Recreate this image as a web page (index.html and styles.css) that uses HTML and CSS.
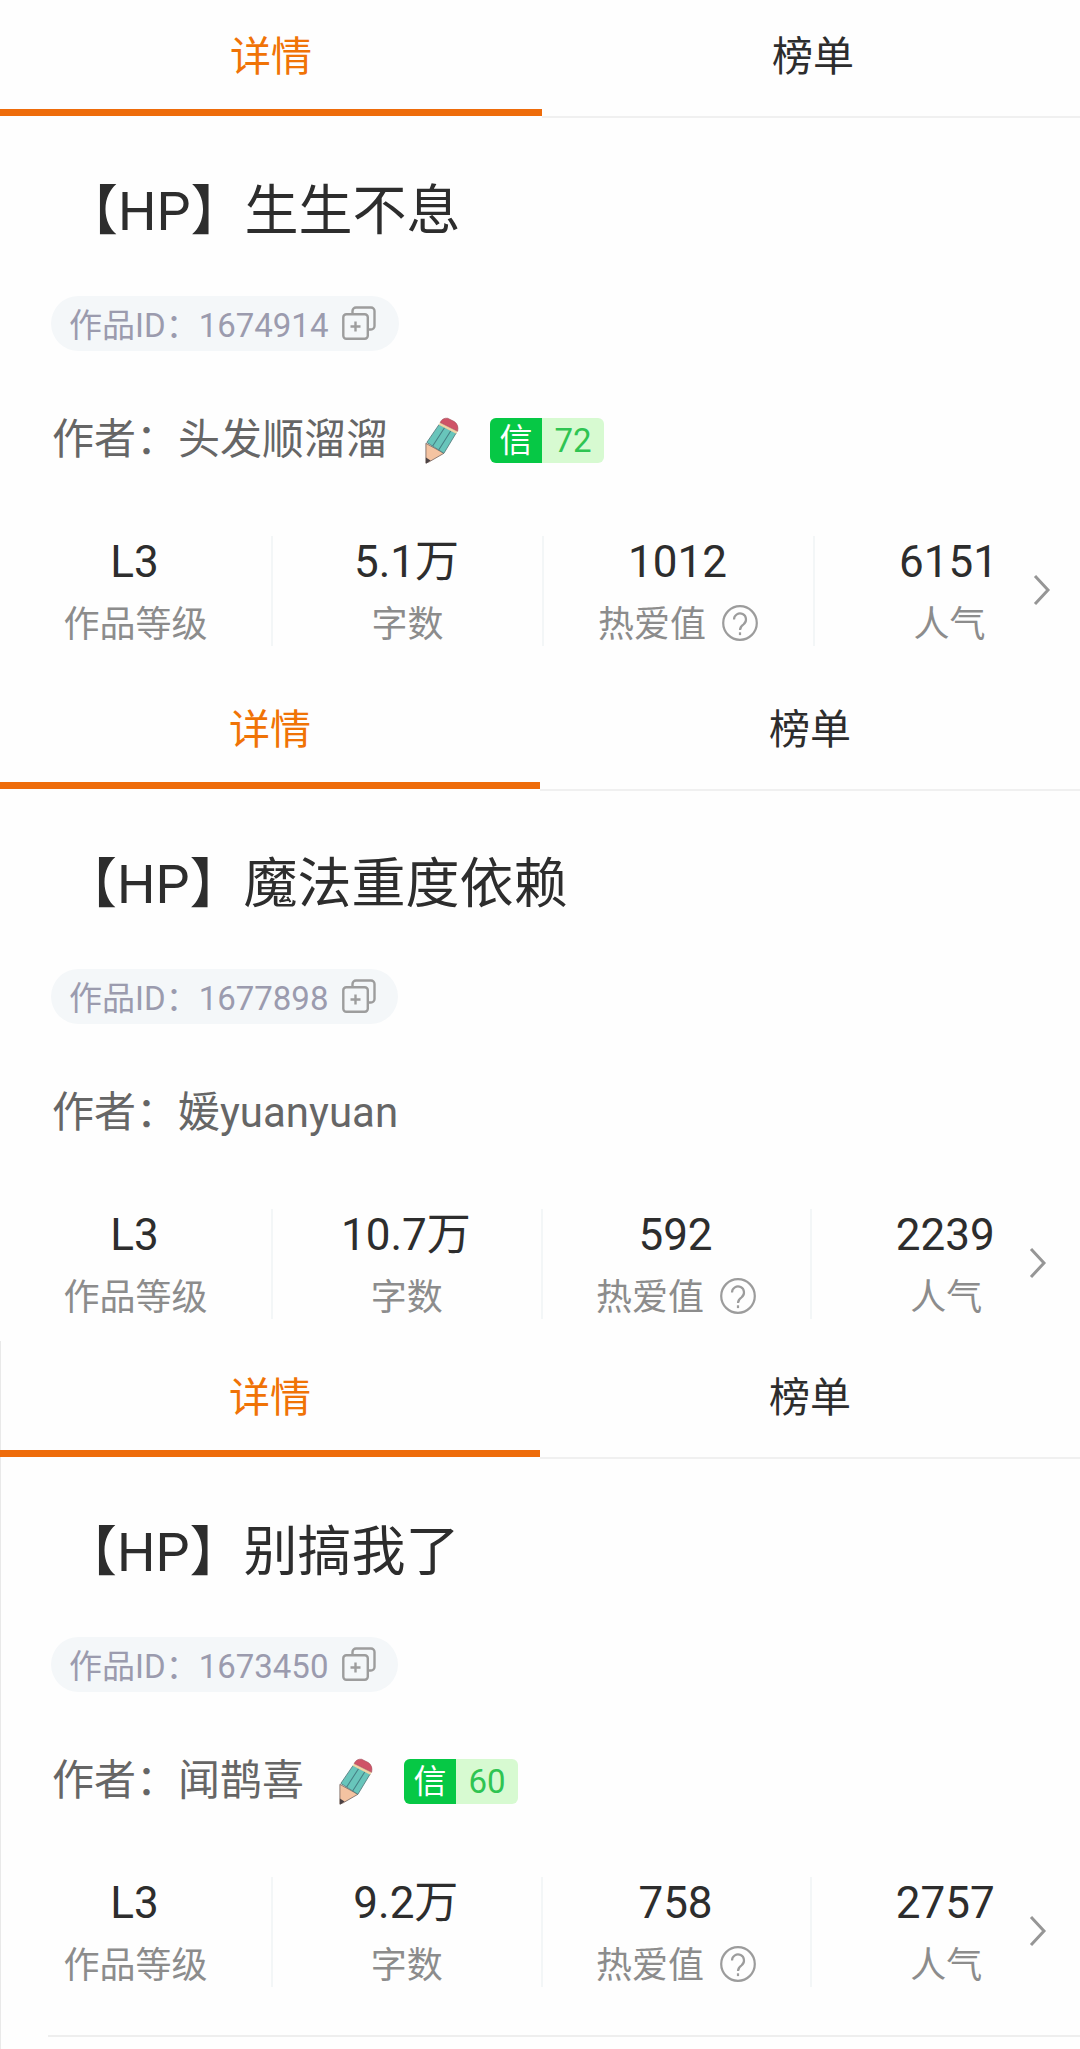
FILE: index.html
```html
<!DOCTYPE html>
<html lang="zh-CN">

<head>
  <meta charset="UTF-8">
  <meta name="viewport" content="width=device-width, initial-scale=1.0">
  <title>作品详情</title>
  <link rel="stylesheet" href="styles.css">
</head>
<body>
  <!-- shared icons -->
  <svg class="icon-defs">
    <symbol id="icon-copy" viewBox="0 0 34 34">
      <path d="M10.500 8V5a3.500 3.500 0 0 1 3.500-3.500H29a3.500 3.500 0 0 1 3.500 3.500V20a3.500 3.500 0 0 1-3.500 3.500H26" />
      <rect x="1.300" y="8.300" width="24.500" height="24.500" rx="3" />
      <path d="M13.500 15.500v10M8.500 20.500h10" />
    </symbol>
    <symbol id="icon-pencil" viewBox="0 0 38 50">
      <path d="M2 28 21 38.500 5.500 47.500 2 48.800z" fill="#f4c3a1" stroke="#6d5a55" stroke-width="0.800" />
      <path d="M2 43 7 46 2 49.500z" fill="#4b4244" />
      <path d="M16 8 34 17 21 38.500 3 27z" fill="#68c5bb" stroke="#557a7c" stroke-width="0.900" />
      <path d="M22 11 9 31M28.500 14.500 15.500 35" fill="none" stroke="#467f84" stroke-width="1.100" />
      <path d="M15.500 8.500 17 6 35.500 15.300 34 18z" fill="#f0d4a5" />
      <path d="M17 6Q19.500.8 25 1.500L32 5Q37 8.500 35.500 15.300z" fill="#cf5367" stroke="#9c4c57" stroke-width="0.600" />
    </symbol>
    <symbol id="icon-help" viewBox="0 0 38 38">
      <circle cx="19" cy="19" r="16.800" />
      <path d="M13 15.500a6 6 0 1 1 9.500 4.800C20 22 19 23 19 26" />
      <path d="M19 28.300v2.800" />
    </symbol>
    <symbol id="icon-arrow" viewBox="0 0 18 32">
      <path d="M2 2 15 16 2 30" />
    </symbol>
  </svg>

  <div class="book book-first">
    <div class="tabs">
      <div class="tab active">详情</div>
      <div class="tab">榜单</div>
    </div>
    <h2 class="title">【HP】生生不息</h2>
    <div class="book-id">作品ID：1674914<svg class="icon-copy"><use href="#icon-copy" /></svg></div>
    <div class="author">
      <span class="author-name">作者：头发顺溜溜</span>
      <svg class="icon-pencil"><use href="#icon-pencil" /></svg>
      <div class="credit"><span class="credit-label">信</span><span class="credit-score">72</span></div>
    </div>
    <div class="stats">
      <div class="stat"><div class="value">L3</div><div class="label">作品等级</div></div>
      <div class="stat"><div class="value">5.1万</div><div class="label">字数</div></div>
      <div class="stat"><div class="value">1012</div><div class="label">热爱值<svg class="icon-help"><use href="#icon-help" /></svg></div></div>
      <div class="stat"><div class="value">6151</div><div class="label">人气</div></div>
      <svg class="icon-arrow"><use href="#icon-arrow" /></svg>
    </div>
  </div>

  <div class="book book-second">
    <div class="tabs">
      <div class="tab active">详情</div>
      <div class="tab">榜单</div>
    </div>
    <h2 class="title">【HP】魔法重度依赖</h2>
    <div class="book-id">作品ID：1677898<svg class="icon-copy"><use href="#icon-copy" /></svg></div>
    <div class="author">
      <span class="author-name">作者：媛yuanyuan</span>
    </div>
    <div class="stats">
      <div class="stat"><div class="value">L3</div><div class="label">作品等级</div></div>
      <div class="stat"><div class="value">10.7万</div><div class="label">字数</div></div>
      <div class="stat"><div class="value">592</div><div class="label">热爱值<svg class="icon-help"><use href="#icon-help" /></svg></div></div>
      <div class="stat"><div class="value">2239</div><div class="label">人气</div></div>
      <svg class="icon-arrow"><use href="#icon-arrow" /></svg>
    </div>
  </div>

  <div class="book book-last">
    <div class="tabs">
      <div class="tab active">详情</div>
      <div class="tab">榜单</div>
    </div>
    <h2 class="title">【HP】别搞我了</h2>
    <div class="book-id">作品ID：1673450<svg class="icon-copy"><use href="#icon-copy" /></svg></div>
    <div class="author">
      <span class="author-name">作者：闻鹊喜</span>
      <svg class="icon-pencil"><use href="#icon-pencil" /></svg>
      <div class="credit"><span class="credit-label">信</span><span class="credit-score">60</span></div>
    </div>
    <div class="stats">
      <div class="stat"><div class="value">L3</div><div class="label">作品等级</div></div>
      <div class="stat"><div class="value">9.2万</div><div class="label">字数</div></div>
      <div class="stat"><div class="value">758</div><div class="label">热爱值<svg class="icon-help"><use href="#icon-help" /></svg></div></div>
      <div class="stat"><div class="value">2757</div><div class="label">人气</div></div>
      <svg class="icon-arrow"><use href="#icon-arrow" /></svg>
    </div>
    <div class="divider"></div>
  </div>
</body>
</html>
```

FILE: styles.css
```css
* {
  box-sizing: border-box;
}

body {
  margin: 0;
  background: #fefefe;
  color: #2d2d2d;
  font-family: Roboto, "Noto Sans CJK SC", sans-serif;
  overflow-x: hidden;
}

.icon-defs {
  display: none;
}

.book {
  width: 1080px;
  height: 668px;
}

.book-first {
  width: 1084px;
  height: 673px;
}

.book-last {
  height: 708px;
  background: linear-gradient(#e9e9e9, #e9e9e9) no-repeat left top / 1px 100%;
}

/* tabs */
.tabs {
  display: flex;
  height: 118px;
}

.tab {
  flex: 1;
  border-bottom: 2px solid #f0f0f0;
  font-size: 41px;
  line-height: 114px;
  text-align: center;
}

.tab.active {
  height: 116px;
  border-bottom: 7px solid #ee6c0b;
  color: #f07306;
}

.title {
  margin: 50px 0 0 63px;
  font-size: 54px;
  font-weight: 400;
  line-height: 88px;
}

.book-first .title {
  margin-left: 64px;
}

.book-id {
  display: flex;
  align-items: center;
  width: 347px;
  height: 55px;
  margin: 40px 0 0 51px;
  padding: 0 0 1px 18px;
  border-radius: 28px;
  background: #f4f7f9;
  color: #9b9bae;
  font-size: 33px;
}

.book-first .book-id {
  width: 348px;
}

.icon-copy {
  width: 34px;
  height: 34px;
  margin-left: 14px;
  fill: none;
  stroke: #9d9d9d;
  stroke-width: 2.4;
}

/* author row */
.author {
  display: flex;
  align-items: center;
  height: 64px;
  margin: 57px 0 0 52px;
  color: #666;
  font-size: 42px;
}

.author-name {
  padding-bottom: 9px;
}

.icon-pencil {
  width: 36px;
  height: 49px;
  margin-left: 36px;
}

.credit {
  display: flex;
  width: 114px;
  height: 45px;
  margin-left: 30px;
  border-radius: 6px;
  overflow: hidden;
  background: #d7fad1;
  font-size: 33px;
  line-height: 46px;
  text-align: center;
}

.book-last .icon-pencil {
  margin-left: 34px;
}

.credit-label {
  width: 52px;
  background: #06c845;
  color: #fff;
}

.credit-score {
  flex: 1;
  color: #2fc452;
}

/* stats */
.stats {
  position: relative;
  display: flex;
  height: 110px;
  margin-top: 64px;
}

.stat {
  flex: 1;
  text-align: center;
}

.stat:not(:nth-child(4)) {
  border-right: 2px solid #f3f6f7;
}

.stat:first-child {
  flex: 0 0 273px;
}

.value {
  margin-right: 2px;
  font-size: 44px;
  line-height: 52px;
}

.label {
  display: flex;
  align-items: center;
  justify-content: center;
  height: 50px;
  margin-top: 8px;
  color: #8c8c8c;
  font-size: 36px;
}

.icon-help {
  width: 38px;
  height: 38px;
  margin: 4px 0 0 15px;
  fill: none;
  stroke: #9c9c9c;
  stroke-width: 2.2;
}

.icon-arrow {
  position: absolute;
  top: 38px;
  right: 33px;
  width: 18px;
  height: 32px;
  fill: none;
  stroke: #969696;
  stroke-width: 3;
}

.divider {
  height: 2px;
  margin: 48px 0 0 48px;
  background: #eee;
}
```
